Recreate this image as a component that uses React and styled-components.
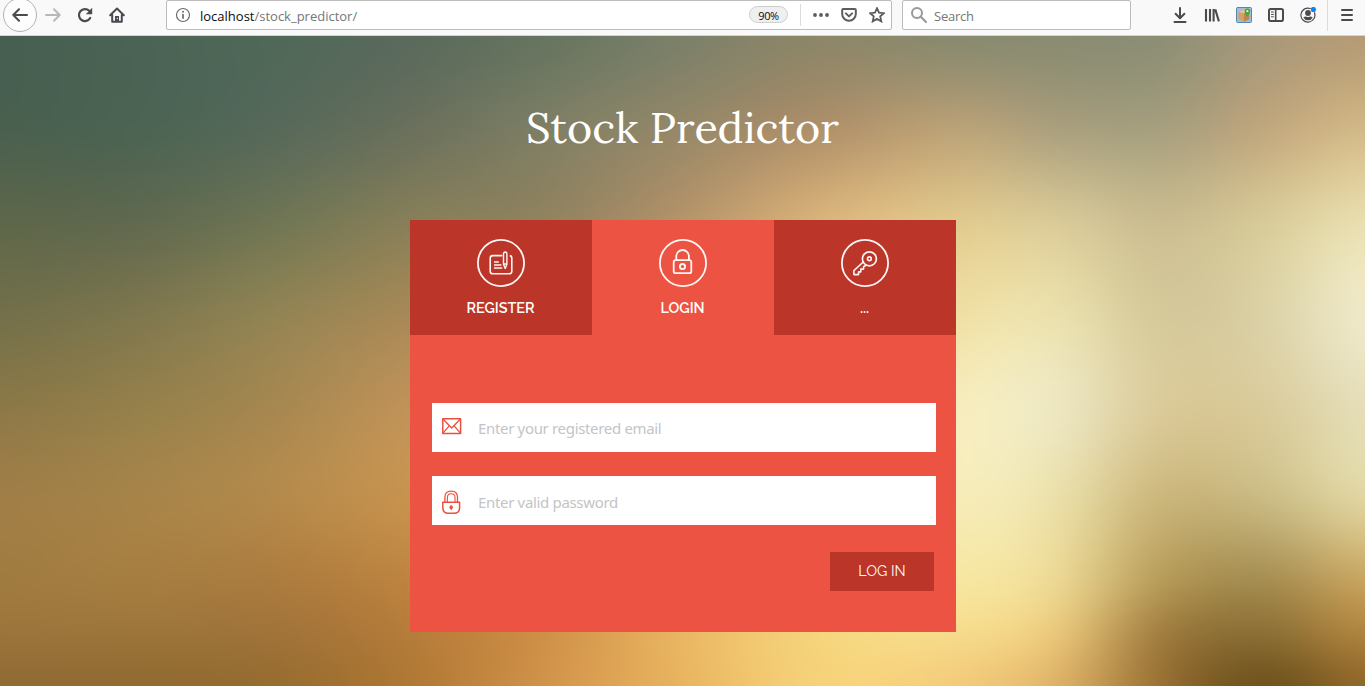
import React from 'react';
import styled, { createGlobalStyle } from 'styled-components';

const GlobalStyle = createGlobalStyle`
  * { box-sizing: border-box; }
  html, body { margin: 0; padding: 0; }
  body { overflow: hidden; font-family: "Open Sans", "Liberation Sans", sans-serif; }
`;

/* ---------- Blurred landscape backdrop ---------- */

const COLS = [0, 137, 273, 410, 547, 683, 820, 956, 1058, 1160, 1262, 1365];
const MESH = [
  [0, '475f50 4a6354 506858 5a6a5c 66745f 7b806a 8c8668 87896f 898b71 8c8e75 a5987a b59a74'],
  [92, '4a604f 4c6453 57695a 6a705c 7f7f65 968868 ae906a bba277 aa9f7d a69f7e c0a67d d3b987'],
  [184, '5e674a 60694f 6f7554 877f59 92835f b5946a dab47b e1c98d d9ca98 cabc90 d8ca98 eadfb0'],
  [280, '73704a 7f774e 928454 a98957 b69464 caa46e e4c589 f0dfa4 ebe1ae d5c899 dbd1a6 efeaca'],
  [370, '8c7847 95804b a68750 c09359 ca9c62 d8b072 ecd392 f7ecbc ede7c2 dbcb9a dacb9b e5deb9'],
  [460, 'a07e47 a78449 b48a4c c8944f d19f5c debb75 f0d992 f7ecb8 ebe0aa ccb77c cbbc85 e3d8a4'],
  [550, 'a07b40 a67d41 ab7b3e bd8340 d09250 e5b366 f4d784 f7e6a0 ecd792 b69a58 a38a4e c7a35d'],
  [600, '9b743b 9c753b a0733a b57c3a cf9148 eab763 f5d57d f6db8c e9c679 a07c3f 8a6e34 b0833f'],
  [650, '8f6a34 916a31 966c2f af7834 d2944b e8b460 f6d27a f3ca79 dcb066 987033 6c501c 8e6629'],
].map(([y, hex]) => ({
  y,
  colors: hex.split(' ').map((h) => [0, 2, 4].map((i) => parseInt(h.slice(i, i + 2), 16))),
}));

const BLEED = 40;

const spline = (a, b, c, d, t) =>
  0.5 * (2 * b + (c - a) * t + (2 * a - 5 * b + 4 * c - d) * t * t + (3 * b - a - 3 * c + d) * t * t * t);

function resample(list, steps, pick) {
  const out = [];
  const at = (i) => list[Math.max(0, Math.min(list.length - 1, i))];
  for (let i = 0; i < list.length - 1; i += 1) {
    for (let s = 0; s < steps; s += 1) out.push(pick(at(i - 1), at(i), at(i + 1), at(i + 2), s / steps));
  }
  out.push(list[list.length - 1]);
  return out;
}

const mixColor = (a, b, c, d, t) =>
  a.map((_, k) => Math.max(0, Math.min(255, spline(a[k], b[k], c[k], d[k], t))));

const stripes = resample(MESH, 4, (a, b, c, d, t) => ({
  y: b.y + (c.y - b.y) * t,
  colors: b.colors.map((_, i) => mixColor(a.colors[i], b.colors[i], c.colors[i], d.colors[i], t)),
}));

const stopXs = resample(COLS, 4, (a, b, c, d, t) => b + (c - b) * t);

const gradientOf = (colors) => {
  const fine = resample(colors, 4, mixColor);
  return `linear-gradient(90deg, ${fine
    .map((c, i) => `rgb(${c.map((v) => v.toFixed(1)).join(' ')}) ${stopXs[i] + BLEED}px`)
    .join(', ')})`;
};

const Page = styled.div`
  width: 1365px;
  height: 686px;
  display: flex;
  flex-direction: column;
  overflow: hidden;
`;

const Stage = styled.main`
  display: grid;
  grid-template: 650px / 1365px;
  overflow: hidden;
`;

const Backdrop = styled.div`
  grid-area: 1 / 1;
  display: grid;
  margin: -${BLEED}px;
  filter: blur(14px);
`;

const Stripe = styled.div`
  grid-area: 1 / 1;
  background: ${(p) => gradientOf(p.$colors)};
  ${(p) =>
    p.$to > 0 &&
    `mask-image: linear-gradient(180deg, transparent ${p.$from + BLEED}px, #000 ${p.$to + BLEED}px);`}
`;

/* ---------- Browser toolbar ---------- */

const Toolbar = styled.header`
  height: 36px;
  flex: none;
  display: flex;
  align-items: flex-start;
  background: #f9f9fa;
  border-bottom: 1px solid #d4d4d4;
  overflow: hidden;
`;

const NavButtons = styled.nav`
  display: flex;
  align-items: center;
  width: 166px;
  height: 30px;
  padding-left: 3px;
`;

const BackCircle = styled.div`
  width: 34px;
  height: 34px;
  margin-right: 8px;
  flex: none;
  border: 1px solid #b3b3b5;
  border-radius: 50%;
  background: #fdfdfd;
  display: grid;
  place-items: center;
`;

const NavIcon = styled.div`
  width: 16px;
  height: 16px;
  margin-right: 16px;
  display: flex;
`;

const Box = styled.div`
  height: 30px;
  width: ${(p) => p.$width}px;
  margin-right: ${(p) => p.$gap}px;
  padding: 0 6px 1px 8px;
  flex: none;
  display: flex;
  align-items: center;
  background: #fff;
  border: 1px solid #bcbcbd;
  border-radius: 2px;
  font-size: 13px;
  color: #767676;
`;

const Address = styled.div`
  flex: 1;
  margin-left: ${(p) => p.$gap}px;
  padding-top: 2px;
  letter-spacing: ${(p) => p.$track || 0}px;
  white-space: nowrap;
  b { color: #0c0c0d; font-weight: 400; }
`;

const Zoom = styled.div`
  width: 39px;
  height: 17px;
  margin-right: 12px;
  padding-top: 1px;
  border: 1px solid #cfcfd0;
  border-radius: 9px;
  background: #efeff0;
  color: #0c0c0d;
  font-size: 11px;
  line-height: 15px;
  letter-spacing: -0.4px;
  text-align: center;
`;

const Rule = styled.div`
  width: 1px;
  height: ${(p) => p.$height}px;
  background: #dcdcdd;
`;

const AddressActions = styled.div`
  display: flex;
  gap: 12px;
  margin-left: 12px;
`;

const Tools = styled.div`
  display: flex;
  align-items: center;
  gap: 16px;
  height: 30px;
`;

const MenuSlot = styled.div`
  display: flex;
  align-items: center;
  gap: 11px;
  margin-left: -5px;
`;

const Ic = ({ children, size = 16, color = '#4a4a4f', w = 2 }) => (
  <svg width={size} height={size} viewBox="0 0 16 16" fill="none" stroke={color} strokeWidth={w} strokeLinecap="round" strokeLinejoin="round">
    {children}
  </svg>
);

function BrowserBar() {
  return (
    <Toolbar>
      <NavButtons>
        <BackCircle>
          <Ic><path d="M15 8H1.5M7 2.2 1.3 8 7 13.8" /></Ic>
        </BackCircle>
        <NavIcon><Ic color="#b8b8ba"><path d="M1 8h13.5M9 2.2 14.7 8 9 13.8" /></Ic></NavIcon>
        <NavIcon>
          <Ic>
            <path d="M13.2 11A6 6 0 1 1 12.2 3.8" strokeWidth="2.2" />
            <path d="M15.2.8v6.4H8.8z" fill="#4a4a4f" stroke="none" />
          </Ic>
        </NavIcon>
        <NavIcon>
          <Ic>
            <path d="M1.2 8.2 8 1.5l6.8 6.7M3.2 8v6.7h9.6V8" />
            <path d="M6 14V9h4v5z" fill="#4a4a4f" stroke="none" />
            <path d="M8.3 11.2v.5" stroke="#f9f9fa" strokeWidth="1" />
          </Ic>
        </NavIcon>
      </NavButtons>
      <Box $width={726} $gap={10}>
        <Ic color="#6b6b6e" w={1.2}>
          <circle cx="8" cy="8" r="6.5" />
          <path d="M8 7.5v3.6" strokeWidth="1.7" />
          <circle cx="8" cy="4.8" r="1" fill="#6b6b6e" stroke="none" />
        </Ic>
        <Address $gap={9}><b>localhost</b>/stock_predictor/</Address>
        <Zoom>90%</Zoom>
        <Rule $height={22} />
        <AddressActions>
          <Ic color="none"><g fill="#5c5c60"><circle cx="2" cy="8" r="1.9" /><circle cx="8" cy="8" r="1.9" /><circle cx="14" cy="8" r="1.9" /></g></Ic>
          <Ic color="#5c5c60">
            <path d="M2.3 2h11.4q1.1 0 1.1 1.1V7a6.8 6.8 0 0 1-13.6 0V3.1Q1.2 2 2.3 2z" />
            <path d="m4.9 6.4 3.1 3 3.1-3" />
          </Ic>
          <Ic color="#5c5c60" w={1.8}><path d="m8 1.2 2 4.5 4.9.5-3.7 3.2 1.1 5L8 11.9l-4.3 2.5 1.1-5L1.1 6.2 6 5.7z" strokeLinejoin="miter" /></Ic>
        </AddressActions>
      </Box>
      <Box $width={229} $gap={41}>
        <Ic color="#98989a"><circle cx="6" cy="6" r="5" /><path d="m9.8 9.8 5.2 5.2" /></Ic>
        <Address $gap={7} $track={-0.25}>Search</Address>
      </Box>
      <Tools>
        <Ic><path d="M8 1v10M3.6 6.8 8 11.2l4.4-4.4M2.5 15h11" /></Ic>
        <Ic w={2.1}><path d="M2 2v12.6M6 2v12.6M9.6 2v12.6M11.3 2.4l3.6 12" strokeLinecap="butt" /></Ic>
        <Ic color="none">
          <rect x=".5" y=".5" width="15" height="15" rx="1" fill="#9bbfdc" stroke="#5288b5" strokeWidth="1" />
          <path d="m2.3 5 5-2.3 6 1.5v8L8 14.5l-5.7-2.3z" fill="#d3a068" />
          <path d="m8 6.3 5.3-2.1v8L8 14.5z" fill="#bb8450" />
          <path d="m2.3 5 5.7 1.3 5.3-2.1-6-1.5z" fill="#e6c297" />
          <path d="M11.3 9.5C9.4 6.8 8.6 5.7 8.6 4.3a2.8 2.8 0 0 1 5.6 0c0 1.4-1 2.5-2.9 5.2z" fill="#43a538" />
          <circle cx="11.4" cy="4.2" r="1.1" fill="#e8f4e0" />
        </Ic>
        <Ic><rect x="1" y="2" width="14" height="12" rx="1.8" /><path d="M7.7 2v12" strokeWidth="1.6" /><path d="M3.4 5h2M3.4 7.4h2M3.4 9.8h2" strokeWidth="1" /></Ic>
        <Ic w={1.2}>
          <path d="M10.3 1.5a7 7 0 1 0 4.2 4.2" />
          <circle cx="8" cy="6" r="2.9" fill="#4a4a4f" stroke="none" />
          <path d="M3.3 10.4q1.2-.9 2.8-.9 1.9 1 3.8 0 1.6 0 2.8.9A5.4 5.4 0 0 1 8 13.3a5.4 5.4 0 0 1-4.7-2.9z" fill="#4a4a4f" stroke="none" />
          <circle cx="13.4" cy="2.5" r="2.6" fill="#0a84ff" stroke="none" />
        </Ic>
        <MenuSlot>
          <Rule $height={32} />
          <Ic><path d="M3 3h10M3 8h10M3 13h10" /></Ic>
        </MenuSlot>
      </Tools>
    </Toolbar>
  );
}

/* ---------- Login page ---------- */

const Content = styled.div`
  grid-area: 1 / 1;
  position: relative;
  z-index: 1;
  display: flex;
  flex-direction: column;
  align-items: center;
`;

const Title = styled.h1`
  margin: 62px 0 0;
  height: 122px;
  font: 400 43.2px/60px "Lora", "Liberation Serif", serif;
  color: #fff;
  white-space: nowrap;
`;

const Card = styled.section`
  width: 546px;
  height: 412px;
  background: #ec5342;
`;

const Tabs = styled.div`
  display: grid;
  grid-template-columns: repeat(3, 182px);
  height: 115px;
`;

const Tab = styled.div`
  display: flex;
  flex-direction: column;
  align-items: center;
  padding-top: 19px;
  background: ${(p) => (p.$active ? '#ec5342' : '#bb3528')};
`;

const TabLabel = styled.span`
  margin-top: 11px;
  font: 600 14.4px/20px "Raleway", "Lato", sans-serif;
  color: #fff;
`;

const Form = styled.div`
  display: flex;
  flex-direction: column;
  padding: 68px 20px 0 22px;
`;

const Field = styled.label`
  display: flex;
  align-items: center;
  height: 49px;
  margin-bottom: 24px;
  padding: 0 10px;
  background: #fff;
`;

const FieldInput = styled.input`
  flex: 1;
  margin-left: 16px;
  padding: ${(p) => p.$drop}px 0 0;
  border: 0;
  outline: 0;
  background: transparent;
  font: 400 15px/22px "Noto Sans", sans-serif;
  letter-spacing: -0.33px;
  text-indent: 0.5px;
  &::placeholder { color: #c4c4c6; opacity: 1; }
`;

const Submit = styled.button`
  align-self: flex-end;
  width: 104px;
  height: 39px;
  margin: 3px 2px 0 0;
  padding: 0 0 1px 1px;
  border: 0;
  background: #bb3528;
  color: #fff;
  font: 400 14.4px/20px "Raleway", "Lato", sans-serif;
`;

const Ring = ({ children }) => (
  <svg width="48" height="48" viewBox="0 0 48 48" fill="none" stroke="#fff" strokeOpacity=".95" strokeWidth="1.8" strokeLinejoin="round">
    <circle cx="24" cy="24" r="23.1" />
    {children}
  </svg>
);

const RegisterIcon = () => (
  <Ring>
    <path d="M25.3 16.6H15.8q-2.6 0-2.6 2.6v13q0 2.6 2.6 2.6h16.4q2.6 0 2.6-2.6v-13q0-2.3-2-2.6" strokeWidth="1.6" />
    <path d="M26.5 15.2q0-2.2 1.7-2.2t1.7 2.2v10.1l-1.7 4.2-1.7-4.2zM26.5 25h3.4" strokeWidth="1.4" />
    <path d="M17 23.1h4.8M17 26.1h7.4M17 29.1h8.3" strokeWidth="1.5" />
  </Ring>
);

const LoginIcon = () => (
  <Ring>
    <rect x="14.7" y="21.2" width="17.6" height="13" rx="2" />
    <path d="M17.3 21v-3.7a6.3 6.3 0 0 1 12.6 0V21" />
    <circle cx="23.5" cy="27.6" r="2.6" />
  </Ring>
);

const KeyIcon = () => (
  <Ring>
    <circle cx="28.4" cy="19.8" r="7" strokeWidth="1.7" />
    <circle cx="28.4" cy="19.8" r="1.9" strokeWidth="1.6" />
    <path d="m22.2 23-9.3 8.7v3.9h4.7v-2.7h2.2v-2.8h2.8v-2.4l2.8-1.7" strokeWidth="1.6" />
  </Ring>
);

const MailIcon = () => (
  <svg width="20" height="24" viewBox="0 0 20 24" fill="none" stroke="#e8513f" strokeWidth="1.5" strokeLinejoin="round">
    <rect x=".8" y="2.8" width="17.8" height="14.6" />
    <path d="m1 3 8.7 9 8.7-9M1 17.2l6-7M18.4 17.2l-6-7" strokeWidth="1.3" />
  </svg>
);

const PasswordIcon = () => (
  <svg width="20" height="28" viewBox="0 -2 20 28" fill="none" stroke="#e8513f" strokeWidth="1.5">
    <path d="M.8 13.2h16.8v5.1q0 6-5.6 6H6.4q-5.6 0-5.6-6z" strokeLinejoin="round" />
    <path d="M2.9 13V8.1q0-5.9 6.3-5.9t6.3 5.9V13" strokeWidth="1.3" />
    <path d="M5.4 13V8.6q0-3.8 3.8-3.8T13 8.6V13" strokeWidth="1.1" />
    <ellipse cx="9.2" cy="18.2" rx="1.7" ry="1.9" fill="#e8513f" stroke="none" />
    <path d="M9.2 18v3" strokeWidth="1.2" />
  </svg>
);

export default function App() {
  return (
    <Page>
      <GlobalStyle />
      <BrowserBar />
      <Stage>
        <Backdrop>
          {stripes.map((s, i) => (
            <Stripe key={s.y} $colors={s.colors} $from={i ? stripes[i - 1].y : 0} $to={s.y} />
          ))}
        </Backdrop>
        <Content>
          <Title>Stock Predictor</Title>
          <Card>
            <Tabs>
              <Tab><RegisterIcon /><TabLabel>REGISTER</TabLabel></Tab>
              <Tab $active><LoginIcon /><TabLabel>LOGIN</TabLabel></Tab>
              <Tab><KeyIcon /><TabLabel>...</TabLabel></Tab>
            </Tabs>
            <Form>
              <Field><MailIcon /><FieldInput placeholder="Enter your registered email" $drop={0} /></Field>
              <Field><PasswordIcon /><FieldInput placeholder="Enter valid password" $drop={2} /></Field>
              <Submit>LOG IN</Submit>
            </Form>
          </Card>
        </Content>
      </Stage>
    </Page>
  );
}
